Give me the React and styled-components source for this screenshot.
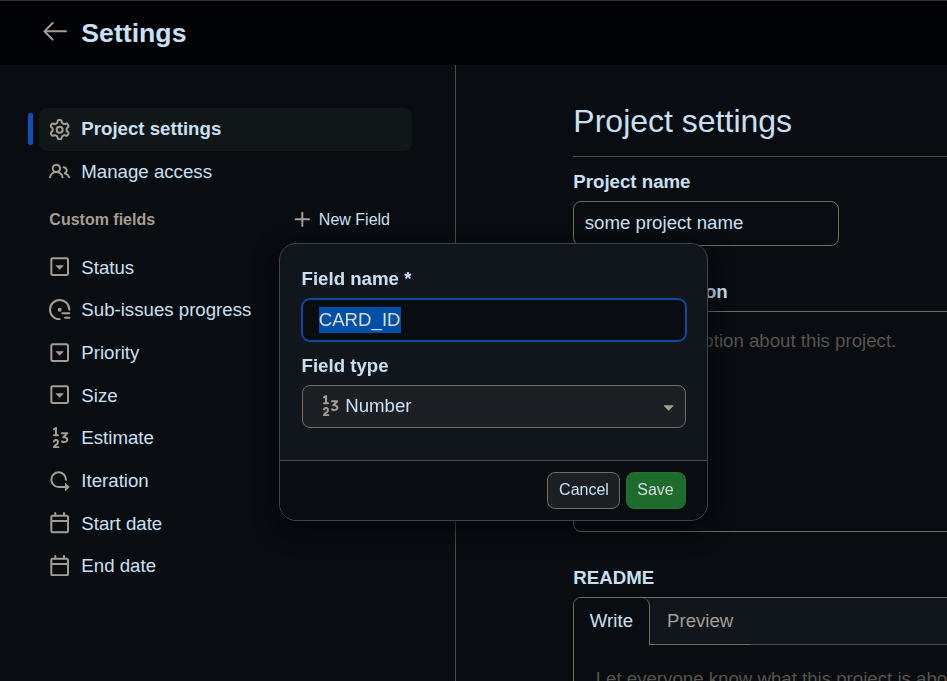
import React from "react";
import styled, { createGlobalStyle } from "styled-components";

const c = {
  canvas: "#090c10",
  header: "#010206",
  overlay: "#11151c",
  control: "#1c2025",
  fg: "#c9e0f4",
  muted: "#a59d92",
  placeholder: "#58534d",
  border: "#736b60",
  borderMuted: "#524c44",
  blue: "#104fb4",
  green: "#1e6c2c",
};

const Global = createGlobalStyle`
  *, *::before, *::after { box-sizing: border-box; }
  html, body, #root { height: 100%; }
  body {
    margin: 0;
    overflow: hidden;
    background: ${c.canvas};
    color: ${c.fg};
    font-family: "Liberation Sans", Arial, sans-serif;
    font-size: 18.667px;
    line-height: 26.667px;
  }
`;

const Svg = styled.svg`
  display: block;
  flex: none;
  fill: ${c.muted};
`;

const Page = styled.div`
  height: 681px;
  display: flex;
  flex-direction: column;
  overflow: hidden;
  position: relative;
`;

const Header = styled.header`
  flex: none;
  height: 65px;
  padding-left: 39px;
  border-top: 1px solid #2f3235;
  background: ${c.header};
  display: flex;
  align-items: center;
  gap: 10.333px;
`;

const BackIcon = styled(Svg)`
  margin-top: -4px;
`;

const HeaderTitle = styled.h1`
  margin: 0;
  font-size: 26.667px;
  line-height: 40px;
  font-weight: 700;
`;

const Columns = styled.div`
  flex: 1;
  min-height: 0;
  display: flex;
`;

const Sidebar = styled.nav`
  flex: none;
  width: 456px;
  padding: 43px 43px 0 39px;
  border-right: 1px solid ${c.borderMuted};
`;

const NavItem = styled.div`
  position: relative;
  height: 42.667px;
  padding-left: 10.333px;
  display: flex;
  align-items: center;
  gap: 10.667px;
  border-radius: 8px;
  background: ${(p) => (p.$active ? "#111618" : "transparent")};
  font-weight: ${(p) => (p.$active ? 700 : 400)};

  &::before {
    content: "";
    display: ${(p) => (p.$active ? "block" : "none")};
    position: absolute;
    left: -11px;
    top: 5px;
    width: 5px;
    height: 32px;
    border-radius: 2px;
    background: ${c.blue};
  }
`;

const FieldLabel = styled.span`
  padding-top: 2px;
`;

const GroupHeader = styled.div`
  height: 52px;
  margin-bottom: 0.5px;
  padding: 0 22px 0 10.333px;
  display: flex;
  align-items: center;
  justify-content: space-between;
  font-size: 16px;
`;

const GroupTitle = styled.span`
  padding-top: 1.6px;
  color: ${c.muted};
  font-weight: 700;
`;

const NewField = styled.button`
  border: 0;
  padding: 0;
  background: none;
  color: inherit;
  font: inherit;
  display: flex;
  align-items: center;
  gap: 5.333px;
`;

const NewFieldText = styled.span`
  padding-top: 1.6px;
`;

const Main = styled.main`
  flex: 1;
  min-width: 0;
  padding: 35px 0 0 117.333px;
`;

const PageTitle = styled.h2`
  margin: 0 0 11.667px;
  height: 57px;
  border-bottom: 1px solid ${c.borderMuted};
  font-size: 32px;
  line-height: 43px;
  font-weight: 400;
`;

const Label = styled.label`
  display: block;
  font-weight: 700;
  margin-bottom: ${(p) => p.$gap}px;
`;

const TextInput = styled.div`
  width: 266px;
  height: 45px;
  margin-bottom: 33.5px;
  padding-left: 10.4px;
  display: flex;
  align-items: center;
  border: 1px solid ${c.border};
  border-radius: 8px;
  line-height: 24px;
`;

const TextArea = styled.div`
  height: 221px;
  margin: 0 -20px 33.333px 0;
  padding: 16px;
  border: 1px solid ${c.border};
  border-radius: 8px;
  color: ${c.placeholder};
`;

const Editor = styled.div`
  height: 200px;
  margin-right: -20px;
  border: 1px solid ${c.border};
  border-radius: 8px;
`;

const TabBar = styled.div`
  display: flex;
  height: 47px;
  background: ${c.overlay};
  border-radius: 8px 8px 0 0;
`;

const Tab = styled.div`
  width: ${(p) => p.$width}px;
  padding-top: 10px;
  padding-left: ${(p) => (p.$active ? 15.5 : 16.667)}px;
  color: ${(p) => (p.$active ? c.fg : c.muted)};
  background: ${(p) => (p.$active ? c.canvas : "transparent")};
  border-right: ${(p) => (p.$active ? `1px solid ${c.border}` : "0")};
  border-bottom: ${(p) => (p.$active ? "0" : `1px solid ${c.border}`)};
  border-radius: ${(p) => (p.$active ? "7px 8px 0 0" : "0")};
`;

const TabFill = styled.div`
  flex: 1;
  border-bottom: 1px solid ${c.borderMuted};
`;

const EditorBody = styled.div`
  padding: 21px 21.333px;
  white-space: nowrap;
  color: ${c.placeholder};
`;

const Dialog = styled.section`
  position: absolute;
  left: 279px;
  top: 243px;
  width: 429px;
  height: 278px;
  display: flex;
  flex-direction: column;
  overflow: hidden;
  border: 1px solid #3e444c;
  border-radius: 17px;
  background: ${c.overlay};
  box-shadow: 0 8px 24px rgba(1, 4, 9, 0.75);
  will-change: transform;
`;

const DialogBody = styled.div`
  flex: 1;
  padding: 22.333px 20px 0 21.5px;
`;

const FocusedInput = styled.div`
  height: 44px;
  margin: 0 0 11px -0.5px;
  padding-left: 15.667px;
  display: flex;
  align-items: center;
  border: 2px solid #104aa3;
  border-radius: 9px;
  background: ${c.canvas};
`;

const Selection = styled.span`
  background: #0050aa;
  color: #dcdde0;
  height: 26px;
  line-height: 26px;
`;

const Select = styled.div`
  height: 43px;
  margin: 0 1px 0 0.5px;
  padding: 0 6px 0 16px;
  display: flex;
  align-items: center;
  gap: 4.9px;
  border: 1px solid ${c.border};
  border-radius: 8px;
  background: ${c.control};
`;

const TypeIcon = styled.span`
  padding-bottom: 1.6px;
`;

const SelectValue = styled.span`
  flex: 1;
`;

const DialogFooter = styled.footer`
  flex: none;
  height: 60px;
  padding: 11px 21px 0;
  display: flex;
  justify-content: flex-end;
  gap: 6px;
  border-top: 1px solid ${c.borderMuted};
  background: ${c.canvas};
`;

const Button = styled.button`
  width: ${(p) => (p.$primary ? 60 : 73)}px;
  height: 37px;
  padding: 0 ${(p) => (p.$primary ? 1 : 0)}px 2px ${(p) => (p.$primary ? 0 : 1)}px;
  border: 1px solid ${(p) => (p.$primary ? "#23702f" : c.border)};
  border-radius: 8px;
  background: ${(p) => (p.$primary ? c.green : c.control)};
  color: ${(p) => (p.$primary ? "#dcdde0" : c.fg)};
  font: 400 16px "Liberation Sans", Arial, sans-serif;
`;

const paths = {
  gear: "M8 0a8.2 8.2 0 0 1 .701.031C9.444.095 9.99.645 10.16 1.29l.288 1.107c.018.066.079.158.212.224.231.114.454.243.668.386.123.082.233.09.299.071l1.103-.303c.644-.176 1.392.021 1.82.63.27.385.506.792.704 1.218.315.675.111 1.422-.364 1.891l-.814.806c-.049.048-.098.147-.088.294.016.257.016.515 0 .772-.01.147.038.246.088.294l.814.806c.475.469.679 1.216.364 1.891a7.977 7.977 0 0 1-.704 1.217c-.428.61-1.176.807-1.82.63l-1.102-.302c-.067-.019-.177-.011-.3.071a5.909 5.909 0 0 1-.668.386c-.133.066-.194.158-.211.224l-.29 1.106c-.168.646-.715 1.196-1.458 1.26a8.006 8.006 0 0 1-1.402 0c-.743-.064-1.289-.614-1.458-1.26l-.289-1.106c-.018-.066-.079-.158-.212-.224a5.738 5.738 0 0 1-.668-.386c-.123-.082-.233-.09-.299-.071l-1.103.303c-.644.176-1.392-.021-1.82-.63a8.12 8.12 0 0 1-.704-1.218c-.315-.675-.111-1.422.363-1.891l.815-.806c.05-.048.098-.147.088-.294a6.214 6.214 0 0 1 0-.772c.01-.147-.038-.246-.088-.294l-.815-.806C.635 6.045.431 5.298.746 4.623a7.92 7.92 0 0 1 .704-1.217c.428-.61 1.176-.807 1.82-.63l1.102.302c.067.019.177.011.3-.071.214-.143.437-.272.668-.386.133-.066.194-.158.211-.224l.29-1.106C6.009.645 6.556.095 7.299.03 7.53.01 7.764 0 8 0Zm-.571 1.525c-.036.003-.108.036-.137.146l-.289 1.105c-.147.561-.549.967-.998 1.189-.173.086-.34.183-.5.29-.417.278-.97.423-1.529.27l-1.103-.303c-.109-.03-.175.016-.195.045-.22.312-.412.644-.573.99-.014.031-.021.11.059.19l.815.806c.411.406.562.957.53 1.456a4.709 4.709 0 0 0 0 .582c.032.499-.119 1.05-.53 1.456l-.815.806c-.081.08-.073.159-.059.19.162.346.353.677.573.989.02.03.085.076.195.046l1.102-.303c.56-.153 1.113-.008 1.53.27.161.107.328.204.501.29.447.222.85.629.997 1.189l.289 1.105c.029.109.101.143.137.146a6.6 6.6 0 0 0 1.142 0c.036-.003.108-.036.137-.146l.289-1.105c.147-.561.549-.967.998-1.189.173-.086.34-.183.5-.29.417-.278.97-.423 1.529-.27l1.103.303c.109.029.175-.016.195-.045.22-.313.411-.644.573-.99.014-.031.021-.11-.059-.19l-.815-.806c-.411-.406-.562-.957-.53-1.456a4.709 4.709 0 0 0 0-.582c-.032-.499.119-1.05.53-1.456l.815-.806c.081-.08.073-.159.059-.19a6.464 6.464 0 0 0-.573-.989c-.02-.03-.085-.076-.195-.046l-1.102.303c-.56.153-1.113.008-1.53-.27a4.44 4.44 0 0 0-.501-.29c-.447-.222-.85-.629-.997-1.189l-.289-1.105c-.029-.11-.101-.143-.137-.146a6.6 6.6 0 0 0-1.142 0ZM11 8a3 3 0 1 1-6 0 3 3 0 0 1 6 0ZM9.5 8a1.5 1.5 0 1 0-3.001.001A1.5 1.5 0 0 0 9.5 8Z",
  people: "M2 5.5a3.5 3.5 0 1 1 5.898 2.549 5.508 5.508 0 0 1 3.034 4.084.75.75 0 1 1-1.482.235 4 4 0 0 0-7.9 0 .75.75 0 0 1-1.482-.236A5.507 5.507 0 0 1 3.102 8.05 3.493 3.493 0 0 1 2 5.5ZM11 4a3.001 3.001 0 0 1 2.22 5.018 5.01 5.01 0 0 1 2.56 3.012.749.749 0 0 1-.885.954.752.752 0 0 1-.549-.514 3.507 3.507 0 0 0-2.522-2.372.75.75 0 0 1-.574-.73v-.352a.75.75 0 0 1 .416-.672A1.5 1.5 0 0 0 11 5.5.75.75 0 0 1 11 4Zm-5.5-.5a2 2 0 1 0-.001 3.999A2 2 0 0 0 5.5 3.5Z",
  select: "M5.06 7.356l2.795 2.833c.08.081.21.081.29 0l2.794-2.833c.13-.131.038-.356-.145-.356H5.206c-.183 0-.275.225-.145.356ZM1 2.75C1 1.784 1.784 1 2.75 1h10.5c.966 0 1.75.784 1.75 1.75v10.5A1.75 1.75 0 0 1 13.25 15H2.75A1.75 1.75 0 0 1 1 13.25Zm1.75-.25a.25.25 0 0 0-.25.25v10.5c0 .138.112.25.25.25h10.5a.25.25 0 0 0 .25-.25V2.75a.25.25 0 0 0-.25-.25Z",
  progress: "M8 0a8 8 0 0 1 8 8 .75.75 0 0 1-1.5 0A6.5 6.5 0 1 0 8 14.5a.75.75 0 0 1 0 1.5A8 8 0 1 1 8 0ZM8 6.5a1.5 1.5 0 1 1 0 3 1.5 1.5 0 0 1 0-3ZM10 10h5.25a.75.75 0 0 1 0 1.5H10a.75.75 0 0 1 0-1.5ZM12 13.25h3.25a.75.75 0 0 1 0 1.5H12a.75.75 0 0 1 0-1.5Z",
  number: "M9 4.75A.75.75 0 0 1 9.75 4h4a.75.75 0 0 1 .53 1.28l-1.89 1.892c.312.076.604.18.867.319.742.391 1.244 1.063 1.244 2.005 0 .653-.231 1.208-.629 1.627-.386.408-.894.653-1.408.777-1.01.243-2.225.063-3.124-.527a.751.751 0 0 1 .822-1.254c.534.35 1.32.474 1.951.322.306-.073.53-.201.67-.349.129-.136.218-.32.218-.596 0-.308-.123-.509-.444-.678-.373-.197-.98-.318-1.806-.318a.75.75 0 0 1-.53-1.28l1.72-1.72H9.75A.75.75 0 0 1 9 4.75Zm-3.587 5.763c-.35-.05-.77.113-.983.572a.75.75 0 1 1-1.36-.632c.508-1.094 1.589-1.565 2.558-1.425 1 .145 1.872.945 1.872 2.222 0 1.433-1.088 2.192-1.79 2.681-.308.216-.571.397-.772.573H7a.75.75 0 0 1 0 1.5H3.75a.75.75 0 0 1-.75-.75c0-.69.3-1.211.67-1.61.348-.372.8-.676 1.15-.92.8-.56 1.18-.904 1.18-1.474 0-.473-.267-.69-.587-.737ZM5.604.089A.75.75 0 0 1 6 .75v4.77h.711a.75.75 0 0 1 0 1.5H3.759a.75.75 0 0 1 0-1.5H4.5V2.15l-.334.223a.75.75 0 0 1-.832-1.248l1.5-1a.75.75 0 0 1 .77-.037Z",
  iteration: "M2.5 7.25a4.75 4.75 0 0 1 9.5 0 .75.75 0 0 0 1.5 0 6.25 6.25 0 1 0-6.25 6.25H12v2.146c0 .223.27.335.427.177l2.896-2.896a.25.25 0 0 0 0-.354l-2.896-2.896a.25.25 0 0 0-.427.177V12H7.25A4.75 4.75 0 0 1 2.5 7.25Z",
  calendar: "M4.75 0a.75.75 0 0 1 .75.75V2h5V.75a.75.75 0 0 1 1.5 0V2h1.25c.966 0 1.75.784 1.75 1.75v10.5A1.75 1.75 0 0 1 13.25 16H2.75A1.75 1.75 0 0 1 1 14.25V3.75C1 2.784 1.784 2 2.75 2H4V.75A.75.75 0 0 1 4.75 0ZM2.5 7.5v6.75c0 .138.112.25.25.25h10.5a.25.25 0 0 0 .25-.25V7.5Zm10.75-4H2.75a.25.25 0 0 0-.25.25V6h11V3.75a.25.25 0 0 0-.25-.25Z",
  plus: "M7.75 2a.75.75 0 0 1 .75.75V7h4.25a.75.75 0 0 1 0 1.5H8.5v4.25a.75.75 0 0 1-1.5 0V8.5H2.75a.75.75 0 0 1 0-1.5H7V2.75A.75.75 0 0 1 7.75 2Z",
  triangle: "m4.427 7.427 3.396 3.396a.25.25 0 0 0 .354 0l3.396-3.396A.25.25 0 0 0 11.396 7H4.604a.25.25 0 0 0-.177.427Z",
};

const Icon = ({ name }) => (
  <Svg width="21.333" height="21.333" viewBox="0 0 16 16" aria-hidden="true">
    <path d={paths[name]} />
  </Svg>
);

const fields = [
  ["select", "Status"],
  ["progress", "Sub-issues progress"],
  ["select", "Priority"],
  ["select", "Size"],
  ["number", "Estimate"],
  ["iteration", "Iteration"],
  ["calendar", "Start date"],
  ["calendar", "End date"],
];

export default function App() {
  return (
    <Page>
      <Global />
      <Header>
        <BackIcon width="32" height="32" viewBox="0 0 24 24" aria-hidden="true">
          <path d="M10.78 19.03a.75.75 0 0 1-1.06 0l-6.25-6.25a.75.75 0 0 1 0-1.06l6.25-6.25a.749.749 0 0 1 1.275.326.749.749 0 0 1-.215.734L5.81 11.5h14.44a.75.75 0 0 1 0 1.5H5.81l4.97 4.97a.75.75 0 0 1 0 1.06Z" />
        </BackIcon>
        <HeaderTitle>Settings</HeaderTitle>
      </Header>
      <Columns>
        <Sidebar>
          <NavItem $active>
            <Icon name="gear" />
            Project settings
          </NavItem>
          <NavItem>
            <Icon name="people" />
            Manage access
          </NavItem>
          <GroupHeader>
            <GroupTitle>Custom fields</GroupTitle>
            <NewField>
              <Icon name="plus" />
              <NewFieldText>New Field</NewFieldText>
            </NewField>
          </GroupHeader>
          {fields.map(([icon, label]) => (
            <NavItem key={label}>
              <Icon name={icon} />
              <FieldLabel>{label}</FieldLabel>
            </NavItem>
          ))}
        </Sidebar>
        <Main>
          <PageTitle>Project settings</PageTitle>
          <Label $gap={5.667}>Project name</Label>
          <TextInput>some project name</TextInput>
          <Label $gap={4.5}>Short description</Label>
          <TextArea>A short description about this project.</TextArea>
          <Label $gap={5}>README</Label>
          <Editor>
            <TabBar>
              <Tab $active $width={76}>Write</Tab>
              <Tab $width={100}>Preview</Tab>
              <TabFill />
            </TabBar>
            <EditorBody>Let everyone know what this project is about...</EditorBody>
          </Editor>
        </Main>
      </Columns>
      <Dialog>
        <DialogBody>
          <Label $gap={5}>Field name *</Label>
          <FocusedInput>
            <Selection>CARD_ID</Selection>
          </FocusedInput>
          <Label $gap={5}>Field type</Label>
          <Select>
            <TypeIcon>
              <Icon name="number" />
            </TypeIcon>
            <SelectValue>Number</SelectValue>
            <Icon name="triangle" />
          </Select>
        </DialogBody>
        <DialogFooter>
          <Button>Cancel</Button>
          <Button $primary>Save</Button>
        </DialogFooter>
      </Dialog>
    </Page>
  );
}
